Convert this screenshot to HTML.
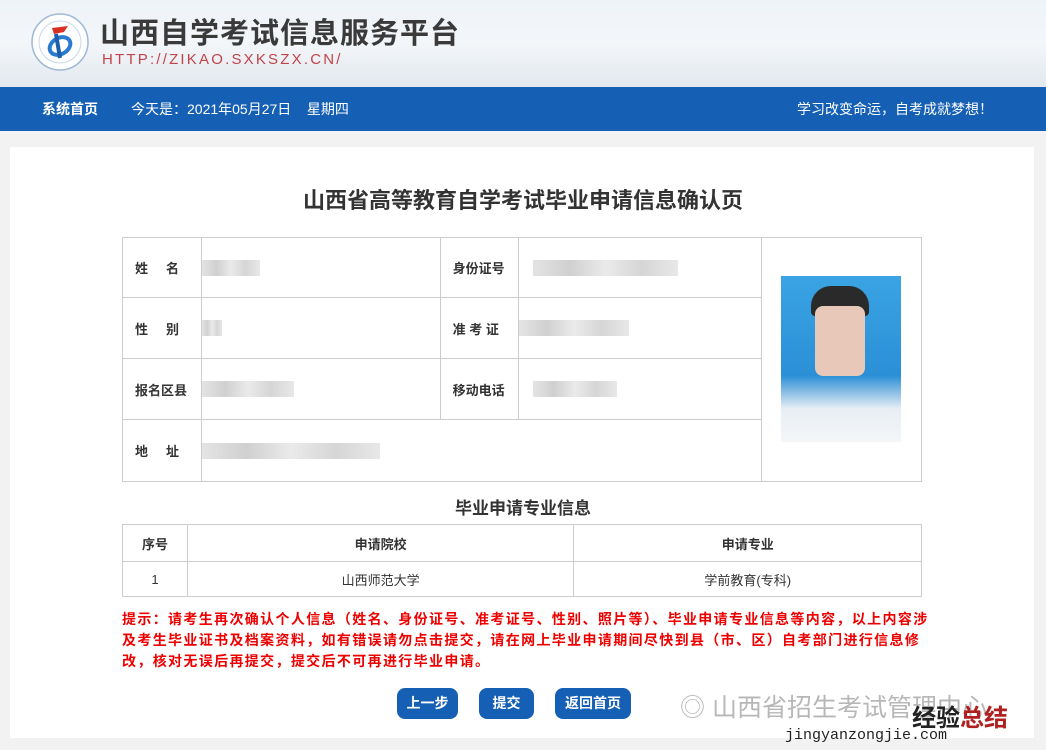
<!DOCTYPE html>
<html><head><meta charset="utf-8"><style>
*{margin:0;padding:0;box-sizing:border-box}
body{width:1046px;height:750px;background:#f2f2f2;font-family:"Liberation Sans","Noto Sans CJK SC",sans-serif;position:relative;overflow:hidden}
.hd{position:absolute;left:0;top:0;width:1046px;height:87px;background:linear-gradient(180deg,#eef3f8 0%,#f3f6f9 50%,#e2e8ee 100%)}
.nav{position:absolute;left:0;top:87px;width:1046px;height:44px;background:#1560b5;color:#fff;font-size:14px;line-height:44px}
.card{position:absolute;left:10px;top:147px;width:1024px;height:591px;background:#fff}
.a{position:absolute}
table{border-collapse:collapse;position:absolute}
td{border:1px solid #ccc;font-size:13px;color:#333}
.blur{display:inline-block;height:16px;background:linear-gradient(90deg,#e4e4e4,#d0d0d0,#eaeaea,#d6d6d6,#e8e8e8);vertical-align:middle}
.btn{position:absolute;top:688px;height:31px;background:#1560b5;color:#fff;border-radius:8px;font-size:14px;font-weight:bold;line-height:31px;text-align:center}
</style></head><body>
<div class="hd">
 <svg class="a" style="left:30px;top:12px" width="60" height="60" viewBox="0 0 60 60"><circle cx="30" cy="30" r="28" fill="#fff" stroke="#9fb9d6" stroke-width="1.5"/><circle cx="30" cy="30" r="21" fill="none" stroke="#c9d8ea" stroke-width="1"/><path d="M22 16 L38 14 L34 20 L24 22Z" fill="#d93025"/><ellipse cx="30" cy="34" rx="11" ry="8" fill="none" stroke="#2a7bd0" stroke-width="4" transform="rotate(-30 30 34)"/><path d="M26 22 L30 46" stroke="#1b5fae" stroke-width="4"/></svg>
 <div class="a" style="left:100px;top:10px;font-size:29px;font-weight:bold;color:#3a3a3a;letter-spacing:1px">山西自学考试信息服务平台</div>
 <div class="a" style="left:102px;top:51px;font-size:15px;color:#c0444a;letter-spacing:2.2px">HTTP://ZIKAO.SXKSZX.CN/</div>
</div>
<div class="nav"><span class="a" style="left:42px;font-weight:bold">系统首页</span><span class="a" style="left:131px">今天是：2021年05月27日&nbsp;&nbsp;&nbsp;&nbsp;星期四</span><span class="a" style="left:797px">学习改变命运，自考成就梦想！</span></div>
<div class="card"></div>
<div class="a" style="left:0;width:1046px;top:183px;text-align:center;font-size:22px;font-weight:bold;color:#333">山西省高等教育自学考试毕业申请信息确认页</div>
<table style="left:122px;top:237px;width:800px">
<colgroup><col style="width:79px"><col style="width:239px"><col style="width:79px"><col style="width:243px"><col style="width:160px"></colgroup>
<tr style="height:60px"><td style="padding-left:12px;font-weight:bold">姓&nbsp;&nbsp;&nbsp;&nbsp;&nbsp;名</td><td><span class="blur" style="width:58px"></span></td><td style="padding-left:12px;font-weight:bold">身份证号</td><td style="padding-left:14px"><span class="blur" style="width:145px"></span></td><td rowspan="4" style="position:relative"><div class="a" style="left:19px;top:38px;width:120px;height:166px;background:linear-gradient(180deg,#3aa4e4 0%,#2b8fd6 60%,#e8eef4 80%,#f4f6f8 100%)"><div class="a" style="left:30px;top:10px;width:58px;height:30px;background:#2a2a2a;border-radius:20px 20px 4px 4px"></div><div class="a" style="left:34px;top:30px;width:50px;height:70px;background:#e8c8b8;border-radius:8px"></div></div></td></tr>
<tr style="height:61px"><td style="padding-left:12px;font-weight:bold">性&nbsp;&nbsp;&nbsp;&nbsp;&nbsp;别</td><td><span class="blur" style="width:20px"></span></td><td style="padding-left:12px;font-weight:bold">准 考 证</td><td><span class="blur" style="width:110px"></span></td></tr>
<tr style="height:61px"><td style="padding-left:12px;font-weight:bold">报名区县</td><td><span class="blur" style="width:92px"></span></td><td style="padding-left:12px;font-weight:bold">移动电话</td><td style="padding-left:14px"><span class="blur" style="width:84px"></span></td></tr>
<tr style="height:62px"><td style="padding-left:12px;font-weight:bold">地&nbsp;&nbsp;&nbsp;&nbsp;&nbsp;址</td><td colspan="3"><span class="blur" style="width:178px"></span></td></tr>
</table>
<div class="a" style="left:0;width:1046px;top:494px;text-align:center;font-size:17px;font-weight:bold;color:#333">毕业申请专业信息</div>
<table style="left:122px;top:524px;width:800px;text-align:center">
<colgroup><col style="width:65px"><col style="width:387px"><col style="width:348px"></colgroup>
<tr style="height:37px;font-weight:bold"><td style="font-weight:bold">序号</td><td style="font-weight:bold">申请院校</td><td style="font-weight:bold">申请专业</td></tr>
<tr style="height:35px"><td>1</td><td>山西师范大学</td><td>学前教育(专科)</td></tr>
</table>
<div class="a" style="left:122px;top:609px;width:808px;font-size:14px;font-weight:bold;color:#e00;line-height:21px;letter-spacing:1.35px">提示：请考生再次确认个人信息（姓名、身份证号、准考证号、性别、照片等）、毕业申请专业信息等内容，以上内容涉及考生毕业证书及档案资料，如有错误请勿点击提交，请在网上毕业申请期间尽快到县（市、区）自考部门进行信息修改，核对无误后再提交，提交后不可再进行毕业申请。</div>
<div class="btn" style="left:397px;width:61px">上一步</div>
<div class="btn" style="left:479px;width:55px">提交</div>
<div class="btn" style="left:555px;width:76px">返回首页</div>
<div class="a" style="left:680px;top:688px;font-size:25px;color:#999;opacity:.7">◎ 山西省招生考试管理中心</div>
<div class="a" style="left:912px;top:698px;font-size:24px;font-weight:bold;color:#222">经验<span style="color:#b02020">总结</span></div>
<div class="a" style="left:785px;top:727px;font-size:15px;color:#222;font-family:'Liberation Mono',monospace">jingyanzongjie.com</div>
</body></html>
